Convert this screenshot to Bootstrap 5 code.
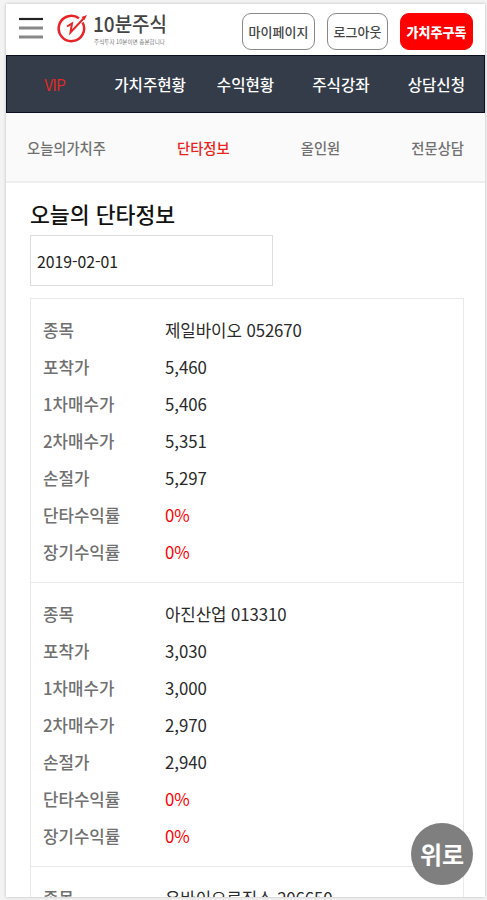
<!DOCTYPE html>
<html lang="ko">
<head>
<meta charset="utf-8">
<meta name="viewport" content="width=device-width, initial-scale=1">
<title>10분주식</title>
<link rel="stylesheet" href="https://cdn.jsdelivr.net/npm/bootstrap@5.3.0/dist/css/bootstrap.min.css">
<style>
body{font-family:"Noto Sans CJK KR",sans-serif;background:#f3f3f3;height:900px;overflow:hidden;color:#222}
.phone{width:479px;height:893px;margin:4px 0 0 6px;background:#fff;box-shadow:0 0 3px #bbb}
.topbar{height:51px;padding:0 12px 0 13px}
.burger{width:24px;height:22px;margin-top:-3px}
.brand-icon{width:32px;height:32px;margin-left:13px;margin-top:-4px}
.brand-text{margin-left:4px;width:80px;height:44px;margin-top:-4px;overflow:visible}
.pills{gap:12px;margin-top:3px}
.pill{height:37px;border:1px solid #888;border-radius:9px;font-size:13px;line-height:1;color:#444;padding:0;font-weight:500}
.pill-my{width:73px}.pill-out{width:61px}
.pill-sub{width:73px;font-weight:900;background:#f00;border-color:#f00;color:#fff}
.main-nav{height:58px;background:#333c48;border:1px solid #0b1022;font-size:15.6px;font-weight:500;padding-top:1px}
.main-nav a{color:#fff;flex:1 1 0}
.main-nav a.vip{color:#df2b26;font-weight:400;font-size:15.6px;letter-spacing:-.8px}
.sub-nav{height:70px;background:#fafafa;border-bottom:2px solid #eee;padding:2px 21px 0;font-size:14.3px;font-weight:500}
.sub-nav a{color:#707070}
.sub-nav a.on{color:#e8241c}
.content{padding:15px 21px 0 24px}
.title{font-size:21.6px;line-height:32px;font-weight:500;color:#111;margin:0 0 5px}
.date-box{width:243px;height:51px;border:1px solid #ddd;padding:2px 6px 0;font-size:15.8px}
.stocks{border:1px solid #e9e9e9;margin-top:12px}
.stock{height:284px;padding:13px 12px 0;border-bottom:1px solid #e9e9e9;font-size:16.8px}
.stock>div{height:37px}
.stock dt{width:122px;font-weight:500;color:#707070}
.stock dd{margin:0;color:#2a2a2a}
.stock dd.name{letter-spacing:-.08px}
.stock dd.rate{color:#f00}
.to-top{position:absolute;left:411px;top:823px;width:62px;height:62px;background:#7f7f7f;color:#fff;font-size:24px;font-weight:700;border:0;padding:0}
</style>
</head>
<body>
<div class="phone overflow-hidden">
  <header class="topbar d-flex align-items-center">
    <svg class="burger" viewBox="0 0 24 22"><path d="M0 2h24" stroke="#222" stroke-width="2.200"/><path d="M0 11h24M0 20h24" stroke="#888" stroke-width="2.800"/></svg>
    <svg class="brand-icon" viewBox="0 0 32 32" fill="none" stroke="#e52528"><path d="M26.600 10.500A12.700 12.700 0 1 1 23 6.300" stroke-width="2.500"/><path d="M11 14.500L16 11.500L14.500 20.500L28.500 5.500" stroke-width="2"/><path d="M31 3L25.500 5L28.500 8Z" fill="#e52528" stroke="none"/></svg>
    <svg class="brand-text" viewBox="0 0 80 44"><text x="1" y="25.500" font-size="20.500" font-weight="500" fill="#444" textLength="74" lengthAdjust="spacingAndGlyphs">10분주식</text><text x="2" y="37.500" font-size="5.500" fill="#777" textLength="71" lengthAdjust="spacingAndGlyphs">주식투자 10분이면 충분합니다</text></svg>
    <div class="pills d-flex ms-auto align-items-center">
      <button class="btn pill pill-my">마이페이지</button>
      <button class="btn pill pill-out">로그아웃</button>
      <button class="btn pill pill-sub">가치주구독</button>
    </div>
  </header>
  <nav class="main-nav d-flex align-items-center text-center">
    <a class="vip text-decoration-none">VIP</a><a class="text-decoration-none">가치주현황</a><a class="text-decoration-none">수익현황</a><a class="text-decoration-none">주식강좌</a><a class="text-decoration-none">상담신청</a>
  </nav>
  <nav class="sub-nav d-flex align-items-center justify-content-between">
    <a class="text-decoration-none">오늘의가치주</a><a class="on text-decoration-none">단타정보</a><a class="text-decoration-none">올인원</a><a class="text-decoration-none">전문상담</a>
  </nav>
  <main class="content">
    <h1 class="title">오늘의 단타정보</h1>
    <div class="date-box d-flex align-items-center">2019-02-01</div>
    <div class="stocks">
      <dl class="stock mb-0">
        <div class="d-flex align-items-center"><dt>종목</dt><dd class="name">제일바이오 052670</dd></div>
        <div class="d-flex align-items-center"><dt>포착가</dt><dd>5,460</dd></div>
        <div class="d-flex align-items-center"><dt>1차매수가</dt><dd>5,406</dd></div>
        <div class="d-flex align-items-center"><dt>2차매수가</dt><dd>5,351</dd></div>
        <div class="d-flex align-items-center"><dt>손절가</dt><dd>5,297</dd></div>
        <div class="d-flex align-items-center"><dt>단타수익률</dt><dd class="rate">0%</dd></div>
        <div class="d-flex align-items-center"><dt>장기수익률</dt><dd class="rate">0%</dd></div>
      </dl>
      <dl class="stock mb-0">
        <div class="d-flex align-items-center"><dt>종목</dt><dd class="name">아진산업 013310</dd></div>
        <div class="d-flex align-items-center"><dt>포착가</dt><dd>3,030</dd></div>
        <div class="d-flex align-items-center"><dt>1차매수가</dt><dd>3,000</dd></div>
        <div class="d-flex align-items-center"><dt>2차매수가</dt><dd>2,970</dd></div>
        <div class="d-flex align-items-center"><dt>손절가</dt><dd>2,940</dd></div>
        <div class="d-flex align-items-center"><dt>단타수익률</dt><dd class="rate">0%</dd></div>
        <div class="d-flex align-items-center"><dt>장기수익률</dt><dd class="rate">0%</dd></div>
      </dl>
      <dl class="stock mb-0">
        <div class="d-flex align-items-center"><dt>종목</dt><dd class="name">유바이오로직스 206650</dd></div>
      </dl>
    </div>
  </main>
</div>
<button class="to-top rounded-circle">위로</button>
<script src="https://cdn.jsdelivr.net/npm/bootstrap@5.3.0/dist/js/bootstrap.bundle.min.js"></script>
</body>
</html>
